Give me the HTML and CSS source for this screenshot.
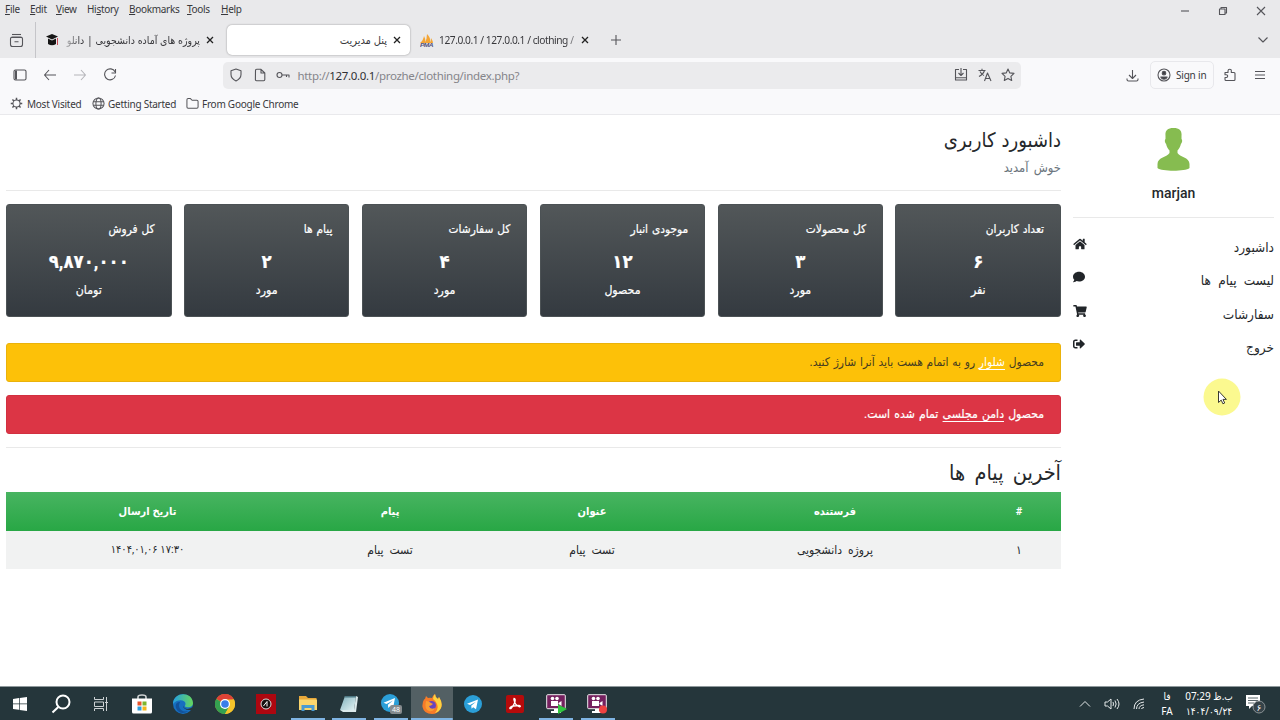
FILE: index.html
```html
<!DOCTYPE html>
<html lang="fa">
<head>
    <meta charset="UTF-8">
    <title>پنل مدیریت</title>
    <link rel="stylesheet" href="styles.css">
</head>
<body>
<div class="browser">
    <div class="menubar">
        <span class="menu-file"><u>F</u>ile</span>
        <span class="menu-edit"><u>E</u>dit</span>
        <span class="menu-view"><u>V</u>iew</span>
        <span class="menu-history">Hi<u>s</u>tory</span>
        <span class="menu-bookmarks"><u>B</u>ookmarks</span>
        <span class="menu-tools"><u>T</u>ools</span>
        <span class="menu-help"><u>H</u>elp</span>
        <div class="window-buttons">
            <svg class="icon" width="10" height="10" viewBox="0 0 10 10"><path d="M1 5h8"/></svg>
            <svg class="icon" width="10" height="10" viewBox="0 0 10 10"><path d="M1.500 3h5.500v5.500h-5.500zM3 3V1.500h5.500V7H7"/></svg>
            <svg class="icon" width="10" height="10" viewBox="0 0 10 10"><path d="M1 1l8 8M9 1l-8 8"/></svg>
        </div>
    </div>

    <div class="tabs">
        <div class="tab-overview">
            <svg class="icon" width="15" height="15" viewBox="0 0 15 15"><path d="M3 1.500h9"/><path d="M2 4.500h11M1.500 6q0-2 2-2h8q2 0 2 2v5.500q0 2-2 2h-8q-2 0-2-2zM5.500 8.800h4"/></svg>
        </div>
        <div class="tab tab-first">
            <svg width="14" height="14" viewBox="0 0 14 14"><path fill="#161616" d="M1 3.500l6-2.500 6 2.500-6 3z"/><path fill="#161616" d="M3 5.500l4 2L11 5.500V11q-4 2.500-8 0z"/><path fill="none" stroke="#c94a58" d="M12.500 5v7"/></svg>
            <span class="tab-title fade" dir="rtl">پروژه های آماده دانشجویی | دانلو</span>
            <svg class="close" width="8" height="8" viewBox="0 0 8 8"><path d="M1 1l6 6M7 1l-6 6"/></svg>
        </div>
        <div class="tab tab-active">
            <span class="tab-title" dir="rtl">پنل مدیریت</span>
            <svg class="close" width="8" height="8" viewBox="0 0 8 8"><path d="M1 1l6 6M7 1l-6 6"/></svg>
        </div>
        <div class="tab tab-pma">
            <svg width="14" height="13" viewBox="0 0 14 13"><path fill="#f3a536" d="M0 9q3-2 4-7 2 3 1 6 2-3 2-8 4 4 3 8 1-1 1-4 2 3 2 5z"/><text x="0" y="12.500" class="pma-text" textLength="13" lengthAdjust="spacingAndGlyphs">PMA</text></svg>
            <span class="tab-title fade-end">127.0.0.1 / 127.0.0.1 / clothing /</span>
            <svg class="close" width="8" height="8" viewBox="0 0 8 8"><path d="M1 1l6 6M7 1l-6 6"/></svg>
        </div>
        <svg class="icon new-tab" width="12" height="12" viewBox="0 0 12 12"><path d="M6 1v10M1 6h10"/></svg>
        <svg class="icon all-tabs" width="12" height="12" viewBox="0 0 12 12"><path d="M1.500 3.500L6 8l4.500-4.500"/></svg>
    </div>

    <div class="toolbar">
        <div class="nav-buttons">
            <svg class="icon" width="14" height="14" viewBox="0 0 14 14"><rect x="1" y="2" width="12" height="10" rx="1.500"/><path stroke-width="2" d="M3 2.500v9"/></svg>
            <svg class="icon" width="14" height="14" viewBox="0 0 14 14"><path d="M13 7H1.500M6 2L1.500 7 6 12"/></svg>
            <svg class="icon disabled" width="14" height="14" viewBox="0 0 14 14"><path d="M1 7h11.500M8 2l4.500 5L8 12"/></svg>
            <svg class="icon" width="14" height="14" viewBox="0 0 14 14"><path d="M12 3.800A5.500 5.500 0 1 0 12.500 7.500M12.500 1v4h-4"/></svg>
        </div>
        <div class="urlbar">
            <svg class="icon" width="14" height="14" viewBox="0 0 14 14"><path d="M7 1l5 1.800v3.700q0 4-5 6.500-5-2.500-5-6.500V2.800z"/></svg>
            <svg class="icon" width="14" height="14" viewBox="0 0 14 14"><path d="M2.500 2.500q0-1.200 1.200-1.200H8L11.800 5v6.500q0 1.200-1.200 1.200h-7q-1.200 0-1.200-1.200zM8 1.500V5h3.500"/></svg>
            <svg class="icon" width="14" height="14" viewBox="0 0 14 14"><circle cx="3.500" cy="7" r="2.500"/><path d="M6 7h7v2.500M10.500 7v2"/></svg>
            <span class="url">http://<b>127.0.0.1</b>/prozhe/clothing/index.php?</span>
            <div class="url-actions">
                <svg class="icon" width="14" height="14" viewBox="0 0 14 14"><path d="M5 1.500H1.500V12h11V1.500H9M7 0v7M4.500 5L7 7.500 9.500 5M1.500 9.800h11"/></svg>
                <svg class="icon" width="14" height="14" viewBox="0 0 14 14"><path d="M.5 2.500h7M4 .8v1.700M6.500 2.500Q5.500 6 1 8.500M2 3.500q1.500 3 4 4M6.500 13l3-8 3.500 8M7.500 10.500h4.500"/></svg>
                <svg class="icon" width="14" height="14" viewBox="0 0 14 14"><path d="M7 1l1.800 3.900 4.200.5-3.100 2.900.8 4.200L7 10.400l-3.700 2.100.8-4.200L1 5.400l4.200-.5z"/></svg>
            </div>
        </div>
        <div class="account-buttons">
            <svg class="icon" width="13" height="13" viewBox="0 0 13 13"><path d="M6.500 1v8M3 6l3.500 3.500L10 6M1 9.500v1q0 1.500 1.500 1.500h8q1.500 0 1.500-1.500v-1"/></svg>
            <div class="sign-in">
                <svg class="icon" width="14" height="14" viewBox="0 0 14 14"><circle cx="7" cy="7" r="6"/><circle cx="7" cy="5.200" r="1.800" fill="#3f3f45"/><path fill="#3f3f45" d="M3.800 9h6.400q-1 2.200-3.200 2.200T3.800 9z"/></svg>
                <span>Sign in</span>
            </div>
            <svg class="icon" width="14" height="14" viewBox="0 0 14 14"><path d="M2 4.500h3V3q0-1.700 1.700-1.700T8.300 3v1.500H11q1 0 1 1v6q0 1-1 1H3q-1 0-1-1v-2h1.300q1.400 0 1.400-1.400T3.300 6.700H2z"/></svg>
            <svg class="icon" width="12" height="12" viewBox="0 0 12 12"><path d="M1 2.500h10M1 6h10M1 9.500h10"/></svg>
        </div>
    </div>

    <div class="bookmarks">
        <svg class="icon" width="13" height="13" viewBox="0 0 14 14"><circle cx="7" cy="7" r="3.800"/><path stroke-width="1.600" d="M7 .8v2.400M7 10.800v2.400M.8 7h2.400M10.800 7h2.400M2.600 2.600l1.700 1.700M9.700 9.700l1.700 1.700M11.400 2.600L9.700 4.300M4.300 9.700l-1.700 1.700"/></svg>
        <span class="bm-visited">Most Visited</span>
        <svg class="icon" width="13" height="13" viewBox="0 0 14 14"><circle cx="7" cy="7" r="6"/><ellipse cx="7" cy="7" rx="2.800" ry="6"/><path d="M1.500 5h11M1.500 9h11"/></svg>
        <span class="bm-started">Getting Started</span>
        <svg class="icon" width="13" height="13" viewBox="0 0 14 14"><path d="M1 3q0-1.300 1.300-1.300h2.500L6.500 3.500h5.200Q13 3.500 13 4.800v6q0 1.300-1.300 1.300H2.300Q1 12.100 1 10.800z"/></svg>
        <span>From Google Chrome</span>
    </div>
</div>

<div class="page" dir="rtl">
    <aside class="sidebar">
        <div class="profile">
            <svg width="33" height="44" viewBox="0 0 33 44"><path fill="#86bc50" d="M16.500 1C23 1 25 4 24.500 9v3c1.200 1 .6 4-.6 5-.6 3-2 5-3.400 6.500V26c2 4 12 4 12 11v4c-4 3.600-28 3.600-32 0v-4c0-7 10-7 12-11v-2.500C11 22 9.700 20 9.100 17 7.900 16 7.300 13 8.500 12V9C8 4 10 1 16.500 1z"/></svg>
            <strong>marjan</strong>
        </div>
        <ul class="side-menu">
            <li>
                <a>داشبورد</a>
                <svg width="14" height="12" viewBox="0 0 576 512"><path d="M280.400 148.300L96 300.100V464a16 16 0 0 0 16 16l112-.3a16 16 0 0 0 16-16V368a16 16 0 0 1 16-16h64a16 16 0 0 1 16 16v95.600a16 16 0 0 0 16 16l112 .4a16 16 0 0 0 16-16V300L295.700 148.300a12.200 12.200 0 0 0-15.300 0zM571.600 251.500L488 182.600V44a12 12 0 0 0-12-12h-56a12 12 0 0 0-12 12v72.600L318.500 43a48 48 0 0 0-61 0L4.300 251.500a12 12 0 0 0-1.600 16.900l25.500 31a12 12 0 0 0 16.900 1.600l235.200-193.700a12.200 12.200 0 0 1 15.300 0L530.900 301a12 12 0 0 0 16.900-1.600l25.500-31a12 12 0 0 0-1.700-16.900z"/></svg>
            </li>
            <li>
                <a>لیست پیام ها</a>
                <svg width="12" height="12" viewBox="0 0 512 512"><path d="M256 32C114.600 32 0 125.100 0 240c0 49.600 21.400 95 57 130.700C44.500 421.100 2.700 466 2.200 466.500A8 8 0 0 0 8 480c66.300 0 116-31.800 140.600-51.400C181.300 440.900 217.600 448 256 448c141.400 0 256-93.100 256-208S397.400 32 256 32z"/></svg>
            </li>
            <li>
                <a>سفارشات</a>
                <svg width="14" height="12" viewBox="0 0 576 512"><path d="M528.100 301.300l47.300-208C578.800 78.300 567.400 64 552 64H159.200l-9.200-44.800C147.800 8 137.900 0 126.500 0H24C10.700 0 0 10.700 0 24v16c0 13.300 10.700 24 24 24h69.900l70.200 343.400C147.300 417.100 136 435.200 136 456a56 56 0 1 0 95.200-40h209.600a56 56 0 1 0 64.300-10.400l5.500-24.300c3.400-15-8-29.300-23.400-29.300H218.100l-6.500-32h293.100c11.200 0 20.900-7.800 23.400-18.700z"/></svg>
            </li>
            <li>
                <a>خروج</a>
                <svg width="12" height="12" viewBox="0 0 512 512"><path d="M497 273L329 441c-15 15-41 4.500-41-17v-96H152c-13.300 0-24-10.700-24-24v-96c0-13.300 10.700-24 24-24h136V88c0-21.400 25.900-32 41-17l168 168c9.300 9.400 9.300 24.600 0 34zM192 436v-40c0-6.600-5.400-12-12-12H96c-17.700 0-32-14.300-32-32V160c0-17.700 14.300-32 32-32h84c6.600 0 12-5.400 12-12V76c0-6.600-5.400-12-12-12H96c-53 0-96 43-96 96v192c0 53 43 96 96 96h84c6.600 0 12-5.400 12-12z"/></svg>
            </li>
        </ul>
    </aside>

    <main class="main">
        <div class="page-head">
            <h1>داشبورد کاربری</h1>
            <p>خوش آمدید</p>
        </div>
        <div class="cards">
            <div class="card"><span>تعداد کاربران</span><b>۶</b><em>نفر</em></div>
            <div class="card"><span>کل محصولات</span><b>۳</b><em>مورد</em></div>
            <div class="card"><span>موجودی انبار</span><b>۱۲</b><em>محصول</em></div>
            <div class="card"><span>کل سفارشات</span><b>۴</b><em>مورد</em></div>
            <div class="card"><span>پیام ها</span><b>۲</b><em>مورد</em></div>
            <div class="card"><span>کل فروش</span><b>۹,۸۷۰,۰۰۰</b><em>تومان</em></div>
        </div>
        <div class="alert alert-warning"><span>محصول <a>شلوار</a> رو به اتمام هست باید آنرا شارژ کنید.</span></div>
        <div class="alert alert-danger"><span>محصول <a>دامن مجلسی</a> تمام شده است.</span></div>
        <div class="messages">
            <h2>آخرین پیام ها</h2>
            <table>
                <colgroup><col class="c-num"><col class="c-sender"><col class="c-title"><col class="c-text"><col></colgroup>
                <thead>
                <tr><th>#</th><th>فرستنده</th><th>عنوان</th><th>پیام</th><th>تاریخ ارسال</th></tr>
                </thead>
                <tbody>
                <tr><td>۱</td><td>پروژه دانشجویی</td><td>تست پیام</td><td>تست پیام</td><td class="sent-at"><bdo dir="ltr">۱۴۰۴,۰۱,۰۶ ۱۷:۳۰</bdo></td></tr>
                </tbody>
            </table>
        </div>
    </main>
</div>

<svg class="cursor" width="38" height="38" viewBox="0 0 38 38"><circle cx="19" cy="19" r="18.500" fill="#fbf98f"/><path fill="#fff" stroke="#3a3a30" d="M15.500 13v11.500l2.700-2.400 1.700 3.700 1.800-.8-1.700-3.600h3.400z"/></svg>

<footer class="taskbar">
    <div class="apps">
        <div class="app app-sm"><svg width="14" height="14" viewBox="0 0 14 14"><path fill="#fff" d="M0 2l6-.9v5.500H0zM6.700 1L14 0v6.600H6.700zM0 7.300h6v5.500L0 12zM6.700 7.300H14V14l-7.300-1z"/></svg></div>
        <div class="app app-sm"><svg width="20" height="20" viewBox="0 0 20 20"><g fill="none" stroke="#fff" stroke-width="2"><circle cx="12" cy="8" r="6.500"/><path d="M7.300 13L1.500 18.500"/></g></svg></div>
        <div class="app app-sm"><svg width="14" height="14" viewBox="0 0 14 14"><path fill="none" stroke="#cdd2d4" d="M.5 0v2.500h9V0M.5 5h9v4.500h-9zM.5 14v-2.500h9V14M12.500 0v14M11 5.500h3"/></svg></div>
        <div class="app"><svg width="20" height="20" viewBox="0 0 20 20"><path fill="none" stroke="#cfd3d4" stroke-width="1.600" d="M6 5V3q0-2 4-2t4 2v2"/><path fill="#fff" d="M0 4.500h20V18q0 1.500-1.500 1.500h-17Q0 19.500 0 18z"/><path fill="#e8532b" d="M5.500 7.500h4v4h-4z"/><path fill="#7eb52c" d="M10.500 7.500h4v4h-4z"/><path fill="#2c9ddc" d="M5.500 12.500h4v4h-4z"/><path fill="#f4b71c" d="M10.500 12.500h4v4h-4z"/></svg></div>
        <div class="app"><svg width="20" height="20" viewBox="0 0 20 20"><defs><linearGradient id="edge" x1="0" x2="1"><stop offset="0" stop-color="#249fe2"/><stop offset="1" stop-color="#66d65b"/></linearGradient></defs><circle cx="10" cy="10" r="10" fill="#176fc0"/><path fill="url(#edge)" d="M0 9C1-2 19-3 20 9c0 4-4 5-7 4-1-.4-1.500-1-.7-2C14 6 5 4 0 10z"/><path fill="#12529b" d="M7 8c-3 5 1 11 8 9-3 3-10 3-12-3-1-4 1-6 4-6z"/><path fill="#25363b" d="M11 10.500q-1.500 3 2 4.300 4 .7 7-2-.2 1.700-1 3-5 1-7.500-1.300-2-2-.5-4z"/></svg></div>
        <div class="app"><svg width="20" height="20" viewBox="0 0 20 20"><circle cx="10" cy="10" r="10" fill="#f5c52b"/><path fill="#de4236" d="M10 10L1.300 5A10 10 0 0 1 18.700 5z"/><path fill="#34a150" d="M10 10L1.300 5A10 10 0 0 0 10 20l4.500-8z"/><path fill="#f5c52b" d="M10 5.500h9A10 10 0 0 1 10 20l4.400-7.500z"/><circle cx="10" cy="10" r="5" fill="#fff"/><circle cx="10" cy="10" r="3.800" fill="#3a7ee8"/></svg></div>
        <div class="app"><svg width="20" height="20" viewBox="0 0 20 20"><path fill="#ad0710" d="M0 0h20v20H0z"/><circle cx="10" cy="10" r="5" fill="#16100f" stroke="#ddd"/><path fill="none" stroke="#fff" d="M7.500 12l3.500-4.500v5"/></svg></div>
        <div class="app open"><svg width="20" height="18" viewBox="0 0 20 18"><path fill="#e7a83a" d="M1 1h7l2 2h8.500v4H1z"/><path fill="#fbd66d" d="M1 4.500h18V15H1z"/><path fill="#4b9bd2" d="M3.500 10h13v6h-3v-3h-7v3h-3z"/></svg></div>
        <div class="app open"><svg width="20" height="20" viewBox="0 0 20 20"><defs><linearGradient id="note" x1="0" x2="1" y2="1"><stop offset="0" stop-color="#7fb0bb"/><stop offset="1" stop-color="#e4f4f5"/></linearGradient></defs><path fill="url(#note)" d="M6 2h11l-2 14H1z"/><path fill="#dceaec" d="M17 2l2 1-2 15H4l-3-2h14z"/><path fill="#4d7782" d="M6 2h11v1.500H5.500z"/></svg></div>
        <div class="app open"><svg width="22" height="22" viewBox="0 0 22 22"><circle cx="10" cy="10" r="9" fill="#2b9fd8"/><path fill="#fff" d="M3.500 9.700L15 5l-2 10.500-3-2.200-1.700 1.700-.4-3.300L13 7.500 6.500 11z"/><rect x="10" y="12" width="12" height="9" rx="2" fill="#858b8e"/><text class="badge" x="16" y="19">48</text></svg></div>
        <div class="app open active"><svg width="20" height="20" viewBox="0 0 20 20"><path fill="#f77b28" d="M3 5l1-3 2 2q2-.7 4 0Q11 1 13 0q0 3 3 5l1-2q4 6 2 11-3 6-9 6Q2 20 .5 13 0 9 2 5.500z"/><path fill="#fed340" d="M13 0q0 3 3 5l1-2q4 6 2 11-2 4-6 5 4-4 2-9-1-3-4-5 0-3 2-5z"/><circle cx="9.500" cy="11.500" r="4.500" fill="#6845bd"/><path fill="#fa9d33" d="M4 7q3 0 5 2l2 1q-2 2-4 2 1 4 6 2-2 4-6 3-5-2-3-10z"/></svg></div>
        <div class="app"><svg width="18" height="18" viewBox="0 0 18 18"><circle cx="9" cy="9" r="9" fill="#2b9fd8"/><path fill="#fff" d="M3 8.800L14 4.500l-2 9.700-2.800-2-1.600 1.500-.4-3L12 6.800 6 10z"/></svg></div>
        <div class="app"><svg width="18" height="18" viewBox="0 0 18 18"><rect width="18" height="18" rx="2" fill="#b60b0b"/><path fill="none" stroke="#fff" stroke-width="1.300" d="M8 3.500q2 0 .7 4Q7.500 11 5 13.500q-1.800.5-1-.8 2-2.200 9-2.200 2.500.6.500 1.300Q9 10.500 8 5q-.3-1 0-1.500z"/></svg></div>
        <div class="app open"><svg width="21" height="20" viewBox="0 0 21 20"><rect x=".7" y=".7" width="18.600" height="14" rx="1" fill="#75215f" stroke="#eee"/><path fill="#fff" d="M5 7h7v5H5zM12.500 9l3-2v5l-3-2zM8 15h4v2h3v2H5v-2h3z"/><circle cx="6.500" cy="4.500" r="1.800" fill="#fff"/><circle cx="11" cy="4.500" r="1.800" fill="#fff"/><path fill="#31c63f" d="M12 10.500l9 4.500-9 5z"/></svg></div>
        <div class="app open"><svg width="21" height="20" viewBox="0 0 21 20"><rect x=".7" y=".7" width="18.600" height="14" rx="1" fill="#75215f" stroke="#eee"/><path fill="#fff" d="M5 7h7v5H5zM12.500 9l3-2v5l-3-2zM8 15h4v2h3v2H5v-2h3z"/><circle cx="6.500" cy="4.500" r="1.800" fill="#fff"/><circle cx="11" cy="4.500" r="1.800" fill="#fff"/><circle cx="16" cy="15.500" r="4" fill="#ee4141"/></svg></div>
    </div>
    <div class="tray">
        <svg class="tray-icon" width="12" height="12" viewBox="0 0 12 12"><path d="M1 8.500l5-5 5 5"/></svg>
        <svg class="tray-icon" width="16" height="14" viewBox="0 0 16 14"><path d="M1 5h2.500L7 2v10L3.500 9H1zM9 5q1 2 0 4M11 3.500q2.300 3.500 0 7M13 2q4 5 0 10"/></svg>
        <svg class="tray-icon" width="12" height="12" viewBox="0 0 12 12"><path d="M1 11Q1 2 11 1M3.500 11Q3.500 5 11 4M6 11q0-3.500 5-4.200M8.500 11q0-1.200 2.500-1.500"/></svg>
        <div class="lang"><span>فا</span><span>FA</span></div>
        <div class="clock"><span>07:29 <bdi>ب.ظ</bdi></span><span><bdo dir="ltr">۱۴۰۴/۰۹/۲۴</bdo></span></div>
        <svg class="notify" width="22" height="22" viewBox="0 0 22 22"><path fill="#fff" d="M1 2h14v11H7l-3 3v-3H1z"/><path stroke="#59666b" d="M3 5h10M3 7.500h10M3 10h6"/><circle cx="14" cy="14" r="6" fill="#364349" stroke="#8b9396"/><text class="notify-count" x="14" y="17.500">۶</text></svg>
    </div>
</footer>
</body>
</html>
```
FILE: styles.css
```css
* {
    box-sizing: border-box;
}

body {
    display: flex;
    flex-direction: column;
    width: 1280px;
    height: 720px;
    margin: 0;
    overflow: hidden;
    background: #fff;
    color: #25282b;
    font-family: Roboto, "DejaVu Sans Condensed", "DejaVu Sans", sans-serif;
}

svg {
    display: block;
    flex: none;
}

/* browser */
.browser {
    height: 115px;
    background: #f9f9fb;
    border-bottom: 1px solid #e9e9ec;
    color: #38383c;
    font: 10.5px/14px "Noto Sans", "DejaVu Sans Condensed", sans-serif;
    white-space: nowrap;
}

.icon {
    fill: none;
    stroke: #55555a;
    stroke-width: 1.1;
    stroke-linejoin: round;
}

.disabled {
    stroke: #b5b5b9;
}

.menubar {
    display: flex;
    height: 20px;
    padding: 2px 14px 0 5px;
    background: #e9e9eb;
    font-size: 10px;
    letter-spacing: -.3px;
}

.menubar u {
    text-underline-offset: 1px;
}

.menu-file { width: 25px; }
.menu-edit { width: 26px; }
.menu-view { width: 31px; }
.menu-history { width: 42px; }
.menu-bookmarks { width: 58px; }
.menu-tools { width: 34px; }
.menu-help { width: 25px; }

.window-buttons {
    display: flex;
    gap: 28px;
    margin-left: auto;
    padding-top: 4px;
}

.tabs {
    display: flex;
    align-items: center;
    height: 38px;
    padding: 2px 11px 0 0;
    background: #e9e9eb;
}

.tab-overview {
    display: flex;
    align-items: center;
    width: 36px;
    height: 36px;
    padding-left: 9px;
    border-right: 1px solid #c5c5c9;
}

.tab {
    display: flex;
    align-items: center;
    height: 30px;
}

.tab-first {
    width: 191px;
    padding: 0 13px 0 9px;
    gap: 6px;
}

.tab-active {
    width: 183px;
    padding: 0 9px;
    gap: 6px;
    background: #fff;
    border-radius: 5px;
    box-shadow: 0 0 2px rgba(0, 0, 0, .4);
    font-size: 11px;
}

.tab-pma {
    width: 178px;
    padding-left: 10px;
    gap: 5px;
    font-size: 10.2px;
    letter-spacing: -.45px;
}

.tab-title {
    flex: 1;
    overflow: hidden;
}

.fade {
    -webkit-mask-image: linear-gradient(to right, rgba(0, 0, 0, .2), #000 14px);
    mask-image: linear-gradient(to right, rgba(0, 0, 0, .2), #000 14px);
}

.fade-end {
    flex: none;
    width: 137px;
    -webkit-mask-image: linear-gradient(to left, rgba(0, 0, 0, .4), #000 10px);
    mask-image: linear-gradient(to left, rgba(0, 0, 0, .4), #000 10px);
}

.pma-text {
    font: bold italic 5px "Liberation Sans", sans-serif;
    fill: #52517d;
}

.close {
    fill: none;
    stroke: #222;
    stroke-width: 1.3;
}

.new-tab {
    margin-left: 22px;
}

.all-tabs {
    margin-left: auto;
}

.toolbar {
    display: flex;
    align-items: center;
    height: 34px;
}

.nav-buttons {
    display: flex;
    gap: 16px;
    width: 223px;
    padding-left: 13px;
}

.urlbar {
    display: flex;
    align-items: center;
    width: 798px;
    height: 27px;
    padding: 0 6px;
    gap: 9.5px;
    background: #ebebed;
    border-radius: 5px;
}

.url {
    margin-left: -2px;
    padding-top: 1px;
    color: #85858a;
    font-size: 11.5px;
    letter-spacing: -.33px;
    line-height: 16px;
}

.url b {
    color: #303034;
    font-weight: normal;
}

.url-actions {
    display: flex;
    gap: 9.5px;
    margin-left: auto;
}

.account-buttons {
    display: flex;
    align-items: center;
    flex: 1;
    padding: 0 14px 0 105px;
}

.sign-in {
    display: flex;
    align-items: center;
    width: 64px;
    height: 28px;
    margin: 0 9px 0 11px;
    padding-left: 6px;
    gap: 5px;
    border: 1px solid #e8e8ec;
    border-radius: 5px;
    font-size: 10px;
    letter-spacing: -.2px;
}

.account-buttons > .icon:last-child {
    margin-left: auto;
}

.bookmarks {
    display: flex;
    align-items: center;
    height: 23px;
    padding-left: 10px;
    gap: 3px;
    font-size: 10px;
    letter-spacing: -.25px;
}

.bm-visited { width: 61px; padding-left: 1px; }
.bm-started { width: 73px; }
.bookmarks .icon:nth-of-type(n+2) { margin-left: 2px; }

/* page */
.page {
    display: flex;
    flex: 1;
    word-spacing: 2px;
}

.sidebar {
    width: 213px;
    padding: 12px 6px 0;
}

.profile {
    display: flex;
    flex-direction: column;
    align-items: center;
    height: 91px;
    border-bottom: 1px solid #e9e9e9;
}

.profile strong {
    margin-top: 11px;
    font: 500 14px/22px Roboto, sans-serif;
}

.side-menu {
    margin: 10px 0 0;
    padding: 0;
    list-style: none;
}

.side-menu li {
    display: flex;
    justify-content: space-between;
    height: 33.4px;
    padding-top: 10px;
    font-size: 13.5px;
    line-height: 18px;
    word-spacing: 4px;
}

.side-menu svg {
    fill: #212529;
}

.main {
    flex: 1;
    padding: 0 6px;
}

.page-head {
    height: 76px;
    padding-top: 10px;
    border-bottom: 1px solid #e9e9e9;
}

.page-head h1 {
    margin: 0;
    font-size: 20px;
    font-weight: normal;
    line-height: 30px;
    word-spacing: 1px;
}

.page-head p {
    margin: 3px 0 0;
    color: #6c757d;
    font-size: 12.9px;
    line-height: 20px;
}

.cards {
    display: grid;
    grid-template-columns: repeat(6, 1fr);
    gap: 12.3px;
    margin-top: 13px;
}

.card {
    display: flex;
    flex-direction: column;
    align-items: center;
    height: 113px;
    padding: 14px 16px 0;
    background: linear-gradient(#525759, #343a40);
    border: 1px solid #4c5255;
    border-radius: 3px;
    color: #fff;
    font-size: 11.8px;
    line-height: 20px;
    word-spacing: 1px;
    -webkit-text-stroke: .2px #fff;
}

.card span {
    align-self: flex-start;
}

.card b {
    margin: 9px 0 4px;
    font-size: 18.5px;
    line-height: 28px;
}

.card em {
    font-size: 12.2px;
    font-style: normal;
}

.alert {
    height: 39px;
    margin-top: 13px;
    padding: 8px 16px;
    border-radius: 3px;
    font-size: 11.9px;
    line-height: 20px;
    word-spacing: .8px;
}

.alert a {
    color: #fff;
    text-decoration: underline;
    text-underline-offset: 3px;
}

.alert-warning {
    margin-top: 26px;
    background: #fdc108;
    border: 1px solid #eab20b;
    color: #453c20;
}

.alert-danger {
    background: #dc3545;
    border: 1px solid #d23040;
    color: #fff;
    font-size: 12.1px;
    word-spacing: 1.2px;
    -webkit-text-stroke: .2px #fff;
}

.messages {
    margin-top: 13px;
    border-top: 1px solid #e9e9e9;
}

.messages h2 {
    height: 44px;
    margin: 0;
    padding-top: 9px;
    font-size: 21.5px;
    font-weight: normal;
    line-height: 32px;
    word-spacing: 4px;
}

table {
    width: 100%;
    table-layout: fixed;
    border-collapse: collapse;
    font-size: 11px;
    text-align: center;
}

.c-num { width: 84px; }
.c-sender { width: 284px; }
.c-title { width: 202px; }
.c-text { width: 202px; }

th,
td {
    height: 38.5px;
    padding: 0;
}

th {
    word-spacing: 0;
}

td {
    font-size: 12px;
    word-spacing: 3px;
}

.sent-at {
    font-size: 11px;
    word-spacing: 0;
}

thead {
    background: linear-gradient(#48b461, #28a745);
    color: #fff;
}

tbody {
    background: #f1f2f2;
}

.cursor {
    position: absolute;
    left: 1203px;
    top: 378px;
}

/* taskbar */
.taskbar {
    display: flex;
    justify-content: space-between;
    height: 34px;
    background: #25363b;
    border-top: 1px solid #8f999c;
    color: #fff;
    font: 10px/15px "Noto Sans", "DejaVu Sans Condensed", sans-serif;
}

.apps,
.tray {
    display: flex;
}

.app {
    display: flex;
    align-items: center;
    justify-content: center;
    width: 41.45px;
    height: 33px;
}

.app-sm {
    width: 40.4px;
}

.open {
    background: linear-gradient(#7fb4e3, #7fb4e3) center bottom / 34px 2px no-repeat;
}

.active {
    background: linear-gradient(#7fb4e3, #7fb4e3) center bottom / 100% 2px no-repeat #536064;
}

.badge {
    font: 7px "Noto Sans", sans-serif;
    fill: #fff;
    text-anchor: middle;
}

.tray {
    align-items: center;
    padding-right: 13px;
}

.tray-icon {
    margin-right: 13px;
    fill: none;
    stroke: #e5e9ea;
}

.lang,
.clock {
    display: flex;
    flex-direction: column;
    align-items: center;
    white-space: nowrap;
}

.lang {
    width: 16px;
    margin: 0 9px 0 1px;
}

.clock {
    width: 50px;
    letter-spacing: -.2px;
}

.notify {
    margin-left: 11px;
}

.notify-count {
    font: 9px "DejaVu Sans", sans-serif;
    fill: #fff;
    text-anchor: middle;
}
```
